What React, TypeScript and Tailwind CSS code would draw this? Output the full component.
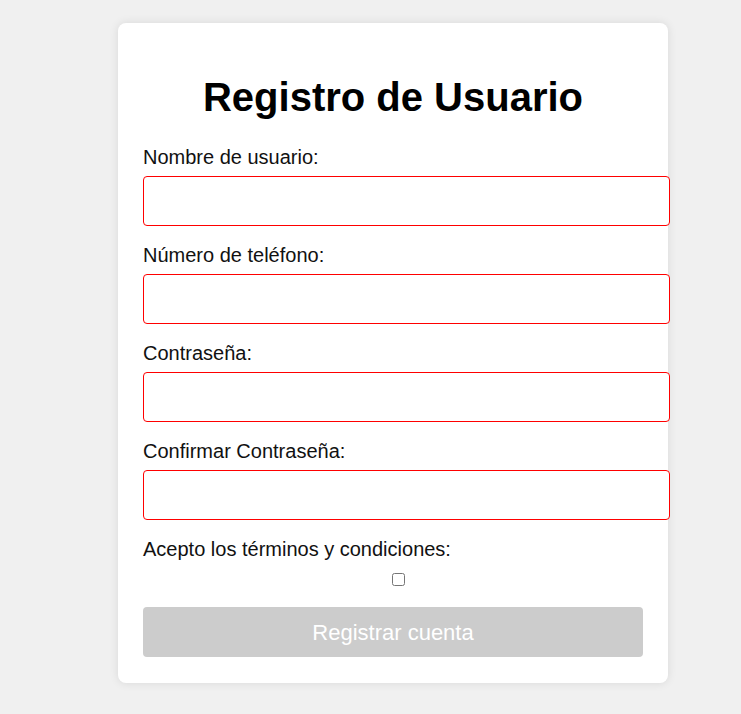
export default function App() {
  const fields = [
    { id: "username", label: "Nombre de usuario:", type: "text" },
    { id: "phone", label: "Número de teléfono:", type: "tel" },
    { id: "password", label: "Contraseña:", type: "password" },
    { id: "confirm", label: "Confirmar Contraseña:", type: "password" },
  ]

  return (
    <div className="min-h-[714px] w-full bg-[#f0f0f0] pt-[23px] pb-[31px] font-['Liberation_Sans',Arial,sans-serif]">
      <div className="ml-[118px] w-[550px] rounded-lg bg-white px-[25px] pt-[51px] pb-[26px] shadow-[0_0_10px_rgba(0,0,0,0.1)]">
        <h1 className="mb-[26px] text-center text-[40px] leading-[46px] font-bold text-black">
          Registro de Usuario
        </h1>

        <form className="flex flex-col">
          {fields.map((f) => (
            <div key={f.id} className="mb-[18px] flex flex-col">
              <label htmlFor={f.id} className="mb-[7px] text-[20px] leading-[23px] text-[#111]">
                {f.label}
              </label>
              <input
                id={f.id}
                type={f.type}
                className="h-[50px] w-[527px] rounded-[4px] border border-[#ff0000] bg-white px-3 text-[18px] outline-none"
              />
            </div>
          ))}

          <label htmlFor="terms" className="text-[20px] leading-[23px] text-[#111]">
            Acepto los términos y condiciones:
          </label>
          <div className="mt-[12px] flex justify-center pl-[10px]">
            <input id="terms" type="checkbox" className="h-[13px] w-[13px]" />
          </div>

          <button
            type="submit"
            disabled
            className="mt-[21px] h-[50px] w-full rounded-[4px] bg-[#cccccc] text-[22px] text-white"
          >
            Registrar cuenta
          </button>
        </form>
      </div>
    </div>
  )
}
